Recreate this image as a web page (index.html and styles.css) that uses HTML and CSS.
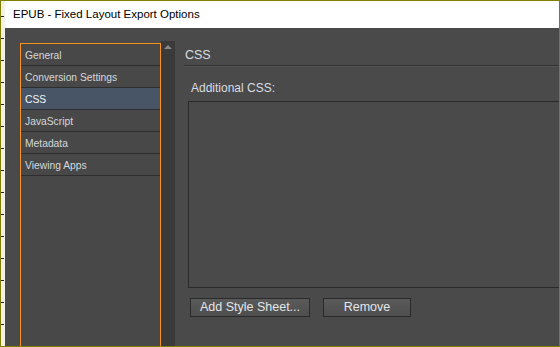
FILE: index.html
```html
<!DOCTYPE html>
<html lang="en">
<head>
  <meta charset="UTF-8" />
  <title>EPUB - Fixed Layout Export Options</title>
  <link rel="stylesheet" href="styles.css">
</head>
<body>
  <div class="ruler"></div>

  <div class="window">
    <div class="titlebar">EPUB - Fixed Layout Export Options</div>

    <div class="client">
      <div class="sidebar">
        <ul class="nav-list">
          <li>General</li>
          <li>Conversion Settings</li>
          <li class="selected">CSS</li>
          <li>JavaScript</li>
          <li>Metadata</li>
          <li>Viewing Apps</li>
        </ul>
      </div>
      <div class="scrollbar"><span class="scroll-up"></span></div>

      <div class="pane">
        <div class="pane-title">CSS</div>
        <div class="field-label">Additional CSS:</div>
        <div class="css-box"></div>
        <div class="button-row">
          <button class="btn btn-add">Add Style Sheet...</button>
          <button class="btn btn-remove">Remove</button>
        </div>
      </div>
    </div>
  </div>
</body>
</html>
```

FILE: styles.css
```css
* {
  margin: 0;
  padding: 0;
  box-sizing: border-box;
}

body {
  width: 560px;
  height: 347px;
  overflow: hidden;
  background: #808000;
  padding: 1px 1px 1px 0;
  display: flex;
  font-family: 'Segoe UI', 'Liberation Sans', Arial, sans-serif;
}

.ruler {
  width: 5px;
  border-left: 1px solid #808000;
  background:
    repeating-linear-gradient(to bottom, transparent 0, transparent 15px, #222 15px, #222 16px, transparent 16px, transparent 22px) no-repeat 0 0 / 3px 100%,
    #f2f1e4;
}

.window {
  flex: 1;
  display: flex;
  flex-direction: column;
}

.titlebar {
  height: 27px;
  background: #ffffff;
  color: #000;
  font-size: 11.5px;
  line-height: 26px;
  padding-left: 8px;
}

.client {
  flex: 1;
  display: flex;
  background: #4a4a4a;
  padding: 15px 0 0 15px;
  color: #d6d6d6;
}

.sidebar {
  width: 141px;
  border: 1px solid #f7931e;
  border-bottom: none;
  background: #484848;
}

.nav-list {
  list-style: none;
}

.nav-list li {
  height: 22px;
  padding: 2px 0 0 4px;
  line-height: 19px;
  font-size: 10.3px;
  color: #d4d8dc;
  border-bottom: 1px solid #2e2e2e;
}

.nav-list li.selected {
  background: #485567;
  color: #f4f6f8;
}

.scrollbar {
  position: relative;
  width: 14px;
  margin-top: -2px;
  background: #3a3a3a;
}

.scroll-up {
  position: absolute;
  left: 3px;
  top: 4px;
  border-left: 4px solid transparent;
  border-right: 4px solid transparent;
  border-bottom: 4px solid #8a8a8a;
}

.pane {
  flex: 1;
  margin-left: 9px;
  display: flex;
  flex-direction: column;
}

.pane-title {
  height: 23px;
  padding-left: 1px;
  font-size: 12.5px;
  line-height: 24px;
  color: #d8dde2;
  border-bottom: 1px solid #333;
  box-shadow: 0 1px 0 #555;
}

.field-label {
  margin: 13px 0 0 7px;
  font-size: 12px;
  line-height: 18px;
  color: #d8dde2;
}

.css-box {
  height: 187px;
  margin: 4px 0 0 4px;
  border: 1px solid #2a2a2a;
  border-right: none;
  background: #4a4a4a;
}

.button-row {
  display: flex;
  gap: 13px;
  margin: 10px 0 0 6px;
}

.btn {
  height: 19px;
  border: 1px solid #2a2a2a;
  background: linear-gradient(#5a5a5a, #4e4e4e);
  color: #e2e6ea;
  font-family: inherit;
  font-size: 12.5px;
  line-height: 17px;
}

.btn-add {
  width: 120px;
}

.btn-remove {
  width: 88px;
}
```
